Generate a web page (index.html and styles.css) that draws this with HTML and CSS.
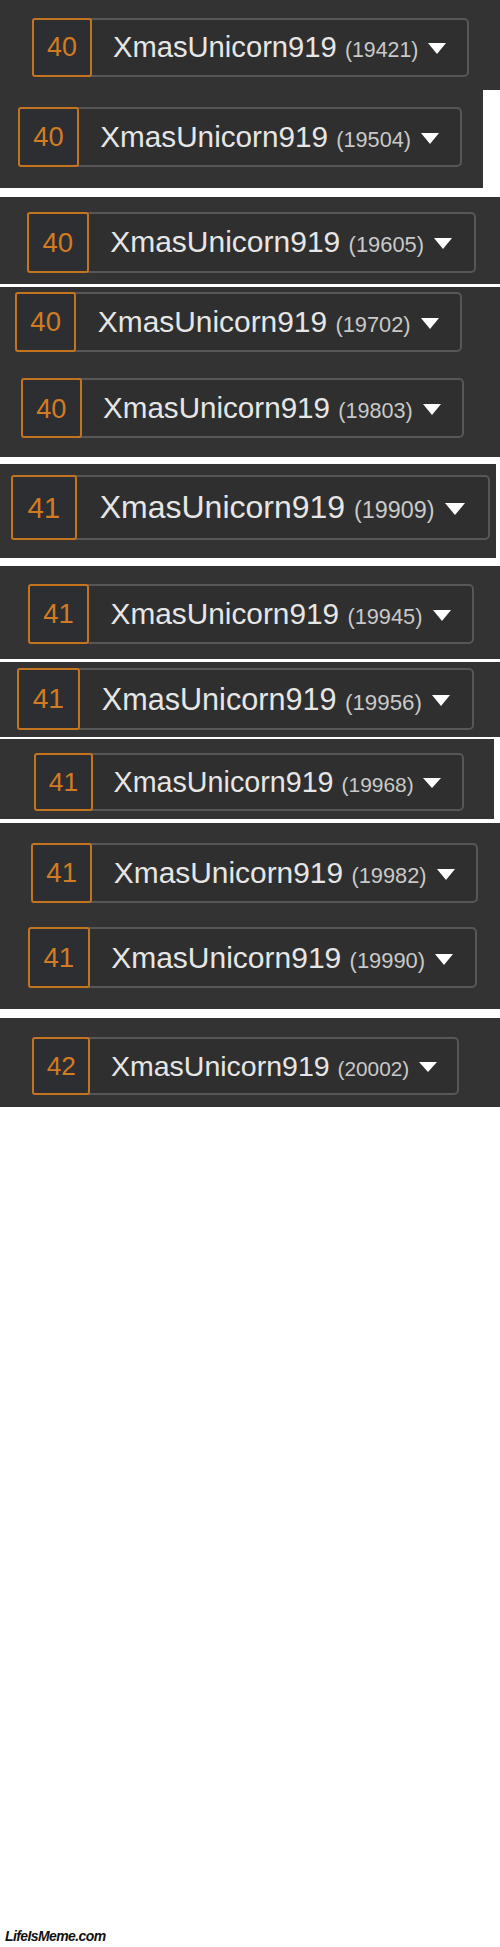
FILE: index.html
```html
<!DOCTYPE html>
<html lang="en">
<head>
<meta charset="utf-8">
<title>XmasUnicorn919</title>
<link rel="stylesheet" href="styles.css">
</head>
<body>
<main class="page">
  <section class="shot p1">
    <div class="tag r1"><span class="lvl">40</span><span class="label">XmasUnicorn919 <span class="count">(19421)</span></span><span class="caret"></span></div>
  </section>
  <section class="shot p2">
    <div class="tag r2"><span class="lvl">40</span><span class="label">XmasUnicorn919 <span class="count">(19504)</span></span><span class="caret"></span></div>
  </section>
  <section class="shot p3">
    <div class="tag r3"><span class="lvl">40</span><span class="label">XmasUnicorn919 <span class="count">(19605)</span></span><span class="caret"></span></div>
  </section>
  <section class="shot p4">
    <div class="tag r4"><span class="lvl">40</span><span class="label">XmasUnicorn919 <span class="count">(19702)</span></span><span class="caret"></span></div>
    <div class="tag r5"><span class="lvl">40</span><span class="label">XmasUnicorn919 <span class="count">(19803)</span></span><span class="caret"></span></div>
  </section>
  <section class="shot p5">
    <div class="tag r6"><span class="lvl">41</span><span class="label">XmasUnicorn919 <span class="count">(19909)</span></span><span class="caret"></span></div>
  </section>
  <section class="shot p6">
    <div class="tag r7"><span class="lvl">41</span><span class="label">XmasUnicorn919 <span class="count">(19945)</span></span><span class="caret"></span></div>
  </section>
  <section class="shot p7">
    <div class="tag r8"><span class="lvl">41</span><span class="label">XmasUnicorn919 <span class="count">(19956)</span></span><span class="caret"></span></div>
  </section>
  <section class="shot p8">
    <div class="tag r9"><span class="lvl">41</span><span class="label">XmasUnicorn919 <span class="count">(19968)</span></span><span class="caret"></span></div>
  </section>
  <section class="shot p9">
    <div class="tag r10"><span class="lvl">41</span><span class="label">XmasUnicorn919 <span class="count">(19982)</span></span><span class="caret"></span></div>
    <div class="tag r11"><span class="lvl">41</span><span class="label">XmasUnicorn919 <span class="count">(19990)</span></span><span class="caret"></span></div>
  </section>
  <section class="shot p10">
    <div class="tag r12"><span class="lvl">42</span><span class="label">XmasUnicorn919 <span class="count">(20002)</span></span><span class="caret"></span></div>
  </section>
  <p class="mark">LifeIsMeme.com</p>
</main>
</body>
</html>
```
FILE: styles.css
```css
html, body {
  margin: 0;
  padding: 0;
  background: #ffffff;
}

.page {
  display: flex;
  flex-direction: column;
  align-items: flex-start;
  min-height: 1947px;
  font-family: "Liberation Sans", Arial, sans-serif;
}

.shot {
  box-sizing: border-box;
  display: flex;
  flex-direction: column;
  align-items: flex-start;
  width: 500px;
  background: #333333;
}

.p1 { height: 90px; padding-top: 18px; }
.p2 { width: 483px; height: 98px; padding-top: 17px; }
.p3 { height: 87px; padding-top: 15px; margin-top: 9px; }
.p4 { height: 170px; padding-top: 5px; margin-top: 3px; }
.p5 { width: 496px; height: 94px; padding-top: 11px; margin-top: 7px; }
.p6 { height: 93px; padding-top: 18px; margin-top: 8px; }
.p7 { height: 75px; padding-top: 6px; margin-top: 3px; }
.p8 { width: 494px; height: 80px; padding-top: 14px; margin-top: 2px; }
.p9 { height: 186px; padding-top: 20px; margin-top: 4px; }
.p10 { height: 89px; padding-top: 19px; margin-top: 9px; }

.tag {
  box-sizing: border-box;
  display: flex;
  align-items: center;
  height: 2.02em;
  padding-right: 0.72em;
  border: 2px solid #575757;
  border-radius: 5px;
  background: #2f2f2f;
}

.r1 { font-size: 29.2px; margin-left: 32px; }
.r2 { font-size: 29.7px; margin-left: 18px; }
.r3 { font-size: 30px; margin-left: 27px; }
.r4 { font-size: 29.9px; margin-left: 15px; }
.r5 { font-size: 29.6px; margin-left: 21px; margin-top: 26px; }
.r6 { font-size: 32px; margin-left: 11px; }
.r7 { font-size: 29.8px; margin-left: 28px; }
.r8 { font-size: 30.6px; margin-left: 17px; }
.r9 { font-size: 28.7px; margin-left: 34px; }
.r10 { font-size: 29.9px; margin-left: 31px; }
.r11 { font-size: 30px; margin-left: 28px; margin-top: 24px; }
.r12 { font-size: 28.5px; margin-left: 32px; }

.lvl {
  box-sizing: border-box;
  display: flex;
  align-items: center;
  justify-content: center;
  align-self: stretch;
  width: 2.23em;
  margin: -2px 0 -2px -2px;
  border: 2px solid #c4741f;
  border-radius: 3px;
  background: #2c2e31;
  color: #d27b22;
  font-size: 0.92em;
  line-height: 1;
}

.label {
  margin-left: 0.72em;
  color: #e6e6e6;
  line-height: 1;
  white-space: nowrap;
}

.count {
  font-size: 0.73em;
  color: #c9c9c9;
}

.caret {
  width: 0;
  height: 0;
  margin-left: 0.34em;
  margin-top: 0.1em;
  border-left: 0.32em solid transparent;
  border-right: 0.32em solid transparent;
  border-top: 0.38em solid #ffffff;
}

.mark {
  margin: auto 0 3px 5px;
  font-family: "Liberation Sans", Arial, sans-serif;
  font-size: 14px;
  font-weight: bold;
  font-style: italic;
  letter-spacing: -0.6px;
  line-height: 16px;
  color: #111111;
}
```
